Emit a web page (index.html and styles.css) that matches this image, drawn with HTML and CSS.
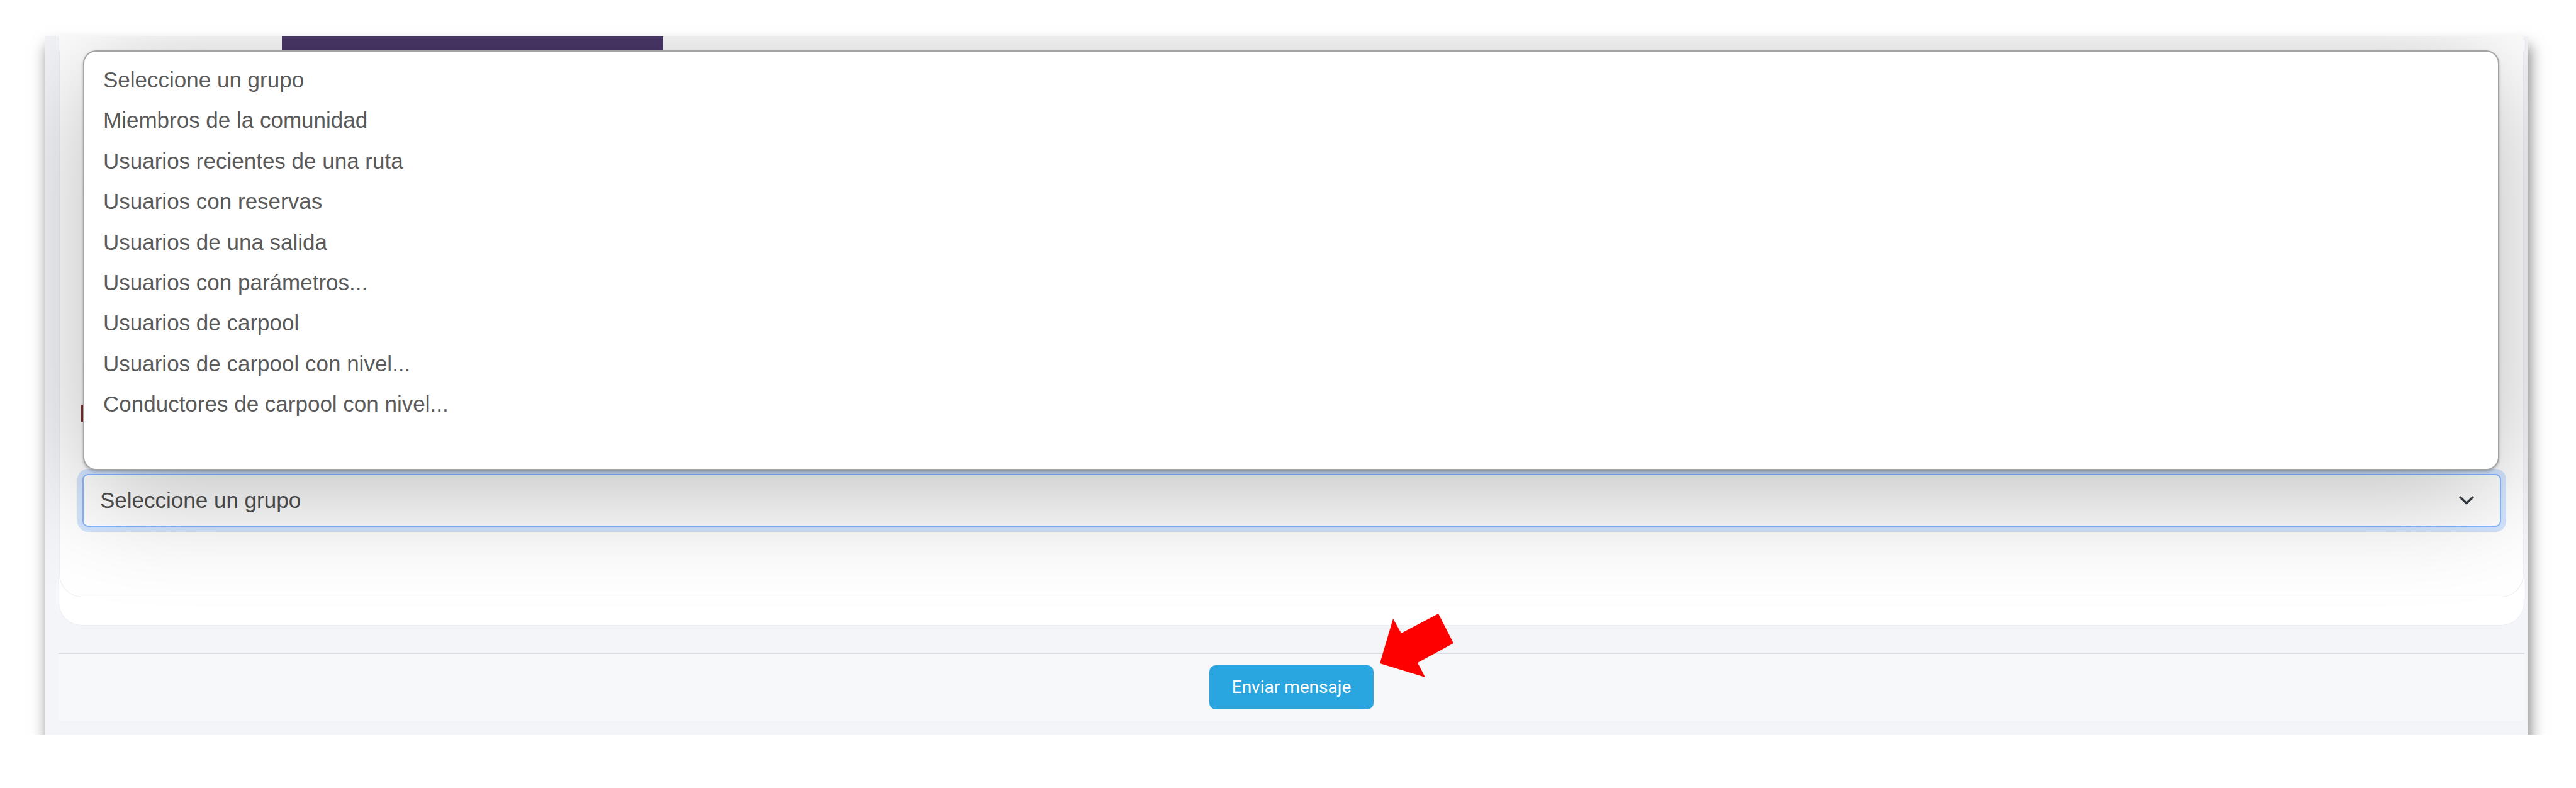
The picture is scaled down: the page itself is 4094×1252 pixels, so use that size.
FILE: index.html
```html
<!DOCTYPE html>
<html lang="es">
<head>
<meta charset="utf-8">
<title>Enviar mensaje</title>
<link rel="stylesheet" href="styles.css">
</head>
<body>
<div class="shot">
  <div class="card-outer">
    <div class="tab-bar"></div>
    <div class="card-inner">
      <div class="req-mark"></div>
      <div class="form-select">
        <span class="form-select-text">Seleccione un grupo</span>
        <svg class="chevron" width="24" height="14" viewBox="0 0 24 14"><path d="M2 2 L12 11.5 L22 2" fill="none" stroke="#343a40" stroke-width="3.4" stroke-linecap="round" stroke-linejoin="round"/></svg>
      </div>
    </div>
    <ul class="popup">
      <li>Seleccione un grupo</li>
      <li>Miembros de la comunidad</li>
      <li>Usuarios recientes de una ruta</li>
      <li>Usuarios con reservas</li>
      <li>Usuarios de una salida</li>
      <li>Usuarios con parámetros...</li>
      <li>Usuarios de carpool</li>
      <li>Usuarios de carpool con nivel...</li>
      <li>Conductores de carpool con nivel...</li>
    </ul>
  </div>
  <div class="divider"></div>
  <div class="footer">
    <button class="btn-send" type="button">Enviar mensaje</button>
  </div>
  <svg class="arrow" width="140" height="115" viewBox="0 0 140 115"><polygon points="13,84 34,13 47,36 106,5 130,52 73,83 85,106" fill="#ff0000"/></svg>
</div>
</body>
</html>
```
FILE: styles.css
```css
html, body {
  margin: 0;
  background: #ffffff;
}
body {
  padding: 57px 0 0 72px;
  font-family: "Liberation Sans", Arial, sans-serif;
}
.shot {
  position: relative;
  width: 3946px;
  box-sizing: border-box;
  padding: 0 6px 22px 21px;
  background: #f3f5f9;
  box-shadow: 3px 16px 22px rgba(0, 0, 0, 0.5);
  display: flex;
  flex-direction: column;
  overflow: hidden;
}
.card-outer {
  position: relative;
  background: #ffffff;
  border: 1px solid #eceef2;
  border-top: 0;
  border-radius: 0 0 37px 37px;
  padding-bottom: 44px;
}
.tab-bar {
  width: 606px;
  height: 25px;
  margin-left: 354px;
  background: #4b386b;
}
.card-inner {
  background: #ffffff;
  border: 1px solid #eceef0;
  border-top: 0;
  border-radius: 0 0 37px 37px;
  padding: 561px 35px 111px 36px;
}
.req-mark {
  width: 3px;
  height: 27px;
  margin-left: -2px;
  margin-bottom: 83px;
  background: #8c2f2f;
}
.form-select {
  height: 84px;
  box-sizing: border-box;
  border: 2px solid #86b7fe;
  border-radius: 9px;
  box-shadow: 0 0 0 8px rgba(13, 110, 253, 0.18);
  background: #ffffff;
  display: flex;
  align-items: center;
  justify-content: space-between;
  padding: 0 41px 0 26px;
}
.form-select-text {
  font-size: 35px;
  color: #505050;
}
.chevron {
  display: block;
}
.popup {
  position: absolute;
  left: 38px;
  top: 23px;
  width: 3840px;
  height: 667px;
  box-sizing: border-box;
  margin: 0;
  list-style: none;
  padding: 13px 0 0 30px;
  background: #ffffff;
  border: 2px solid #a4a4a4;
  border-radius: 21px;
  box-shadow: 0 2px 4px rgba(0, 0, 0, 0.25), 0 30px 180px rgba(0, 0, 0, 0.28);
  z-index: 5;
}
.popup li {
  font-size: 35px;
  line-height: 64.4px;
  color: #5a5a5a;
  white-space: nowrap;
}
.divider {
  height: 2px;
  margin-top: 43px;
  background: #dadde2;
}
.footer {
  background: #f7f8fa;
  padding: 18px 0;
  display: flex;
  justify-content: center;
}
.btn-send {
  height: 70px;
  padding: 0 36px;
  border: 0;
  border-radius: 10px;
  background: #29a6df;
  color: #ffffff;
  font-family: Roboto, "Liberation Sans", sans-serif;
  font-size: 28px;
  font-weight: 400;
  line-height: 70px;
}
.arrow {
  position: absolute;
  left: 2108px;
  top: 913px;
  z-index: 6;
}
```
